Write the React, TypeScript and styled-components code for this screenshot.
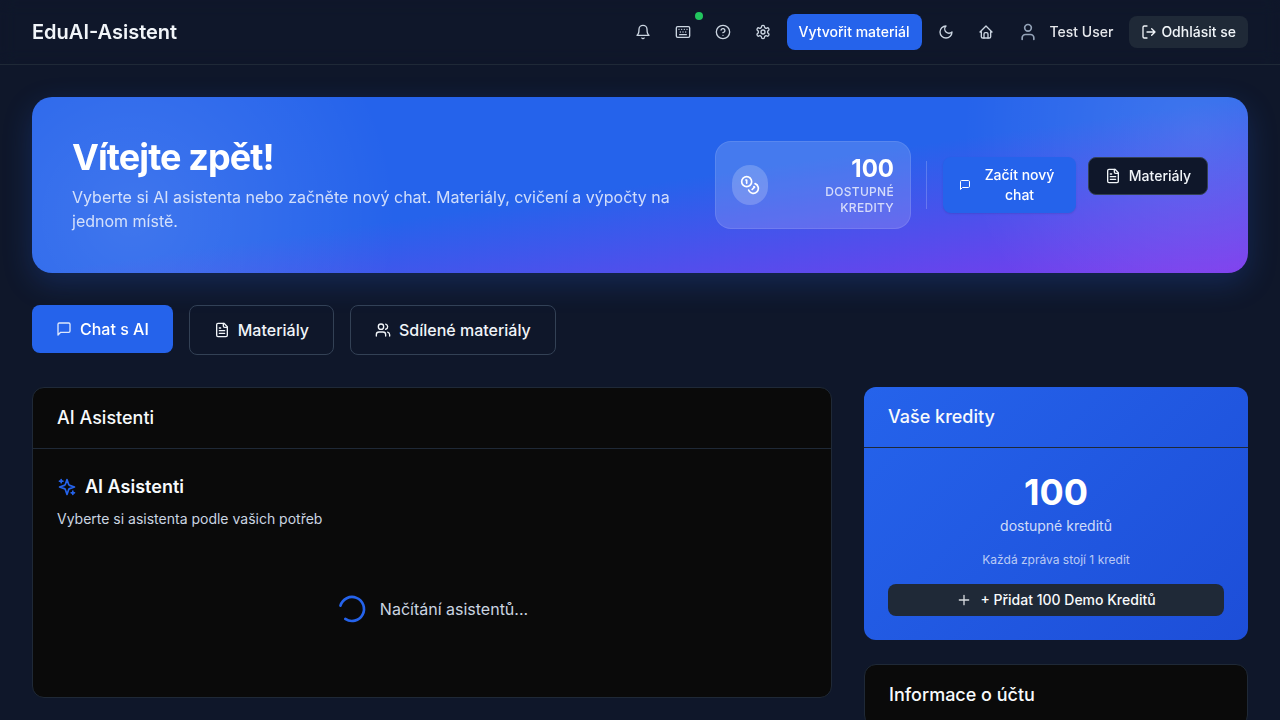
import React from 'react';
import styled, { createGlobalStyle, css } from 'styled-components';

const GlobalStyle = createGlobalStyle`
  *, *::before, *::after { box-sizing: border-box; }
  html { background: #0f172a; }
  body {
    margin: 0;
    height: 100vh;
    overflow: hidden;
    background: #0f172a;
    color: #f8fafc;
    font-family: Inter, "Liberation Sans", sans-serif;
    font-size: 16px;
    line-height: 24px;
  }
  h1, h2, h3, p { margin: 0; }
  button { font: inherit; border: 0; margin: 0; cursor: pointer; }
`;

const Svg = styled.svg<{ $size: number }>`
  width: ${p => p.$size}px;
  height: ${p => p.$size}px;
  flex: none;
  fill: none;
  stroke: currentColor;
  stroke-width: 2;
  stroke-linecap: round;
  stroke-linejoin: round;
`;

type IconProps = { size?: number; children?: React.ReactNode; className?: string };

const Icon = ({ size = 16, children, className }: IconProps) => (
  <Svg $size={size} viewBox="0 0 24 24" className={className} aria-hidden="true">
    {children}
  </Svg>
);

const BellIcon = () => (
  <Icon>
    <path d="M6 8a6 6 0 0 1 12 0c0 7 3 9 3 9H3s3-2 3-9" />
    <path d="M10.3 21a1.94 1.94 0 0 0 3.4 0" />
  </Icon>
);
const KeyboardIcon = () => (
  <Icon>
    <path d="M10 8h.01M12 12h.01M14 8h.01M16 12h.01M18 8h.01M6 8h.01M7 16h10M8 12h.01" />
    <rect width="20" height="16" x="2" y="4" rx="2" />
  </Icon>
);
const HelpIcon = () => (
  <Icon>
    <circle cx="12" cy="12" r="10" />
    <path d="M9.09 9a3 3 0 0 1 5.83 1c0 2-3 3-3 3M12 17h.01" />
  </Icon>
);
const SettingsIcon = () => (
  <Icon>
    <path d="M12.22 2h-.44a2 2 0 0 0-2 2v.18a2 2 0 0 1-1 1.73l-.43.25a2 2 0 0 1-2 0l-.15-.08a2 2 0 0 0-2.73.73l-.22.38a2 2 0 0 0 .73 2.73l.15.1a2 2 0 0 1 1 1.72v.51a2 2 0 0 1-1 1.74l-.15.09a2 2 0 0 0-.73 2.73l.22.38a2 2 0 0 0 2.73.73l.15-.08a2 2 0 0 1 2 0l.43.25a2 2 0 0 1 1 1.73V20a2 2 0 0 0 2 2h.44a2 2 0 0 0 2-2v-.18a2 2 0 0 1 1-1.73l.43-.25a2 2 0 0 1 2 0l.15.08a2 2 0 0 0 2.73-.73l.22-.39a2 2 0 0 0-.73-2.73l-.15-.08a2 2 0 0 1-1-1.74v-.5a2 2 0 0 1 1-1.74l.15-.09a2 2 0 0 0 .73-2.73l-.22-.38a2 2 0 0 0-2.73-.73l-.15.08a2 2 0 0 1-2 0l-.43-.25a2 2 0 0 1-1-1.73V4a2 2 0 0 0-2-2z" />
    <circle cx="12" cy="12" r="3" />
  </Icon>
);
const MoonIcon = () => (
  <Icon>
    <path d="M12 3a6 6 0 0 0 9 9 9 9 0 1 1-9-9Z" />
  </Icon>
);
const HomeIcon = () => (
  <Icon>
    <path d="M5 12H3l9-9 9 9h-2" />
    <path d="M5 12v7a2 2 0 0 0 2 2h10a2 2 0 0 0 2-2v-7" />
    <path d="M9 21v-6a2 2 0 0 1 2-2h2a2 2 0 0 1 2 2v6" />
  </Icon>
);
const UserIcon = () => (
  <Icon size={20}>
    <path d="M19 21v-2a4 4 0 0 0-4-4H9a4 4 0 0 0-4 4v2" />
    <circle cx="12" cy="7" r="4" />
  </Icon>
);
const LogOutIcon = () => (
  <Icon>
    <path d="M9 21H5a2 2 0 0 1-2-2V5a2 2 0 0 1 2-2h4M16 17l5-5-5-5M21 12H9" />
  </Icon>
);
const CoinsIcon = () => (
  <Icon size={20}>
    <circle cx="8" cy="8" r="6" />
    <path d="M18.09 10.37A6 6 0 1 1 10.34 18M7 6h1v4M16.71 13.88l.7.71-2.82 2.82" />
  </Icon>
);
const MessageIcon = ({ size }: { size?: number }) => (
  <Icon size={size}>
    <path d="M21 15a2 2 0 0 1-2 2H7l-4 4V5a2 2 0 0 1 2-2h14a2 2 0 0 1 2 2z" />
  </Icon>
);
const FileTextIcon = () => (
  <Icon>
    <path d="M15 2H6a2 2 0 0 0-2 2v16a2 2 0 0 0 2 2h12a2 2 0 0 0 2-2V7Z" />
    <path d="M14 2v4a2 2 0 0 0 2 2h4M10 9H8M16 13H8M16 17H8" />
  </Icon>
);
const UsersIcon = () => (
  <Icon>
    <path d="M16 21v-2a4 4 0 0 0-4-4H6a4 4 0 0 0-4 4v2" />
    <circle cx="9" cy="7" r="4" />
    <path d="M22 21v-2a4 4 0 0 0-3-3.87M16 3.13a4 4 0 0 1 0 7.75" />
  </Icon>
);
const SparklesIcon = () => (
  <Icon size={20}>
    <path d="m12 3-1.912 5.813a2 2 0 0 1-1.275 1.275L3 12l5.813 1.912a2 2 0 0 1 1.275 1.275L12 21l1.912-5.813a2 2 0 0 1 1.275-1.275L21 12l-5.813-1.912a2 2 0 0 1-1.275-1.275L12 3Z" />
    <path d="M5 3v4M19 17v4M3 5h4M17 19h4" />
  </Icon>
);
const PlusIcon = () => (
  <Icon>
    <path d="M5 12h14M12 5v14" />
  </Icon>
);

const Header = styled.header`
  display: flex;
  align-items: center;
  justify-content: space-between;
  height: 65px;
  padding: 0 32px;
  border-bottom: 1px solid #1f2937;
  backdrop-filter: blur(8px);
`;
const Brand = styled.div`
  font-size: 20px;
  font-weight: 600;
  line-height: 28px;
  color: #f1f5f9;
`;
const Nav = styled.nav`
  display: flex;
  align-items: center;
  gap: 8px;
`;
const IconButton = styled.button`
  position: relative;
  display: flex;
  align-items: center;
  justify-content: center;
  width: 32px;
  height: 32px;
  padding: 0;
  background: none;
  color: #cbd5e1;
`;
const StatusDot = styled.span`
  position: absolute;
  top: -4px;
  right: -4px;
  width: 8px;
  height: 8px;
  border-radius: 50%;
  background: #22c55e;
`;
const CreateButton = styled.button`
  height: 36px;
  width: 135px;
  padding: 0;
  border-radius: 8px;
  background: #2563eb;
  color: #fff;
  font-size: 14px;
  font-weight: 500;
  white-space: nowrap;
`;
const UserBox = styled.div`
  display: flex;
  align-items: center;
  gap: 12px;
  margin: 0 8px;
  font-size: 14px;
  font-weight: 500;
  color: #e5e7eb;
  svg { color: #94a3b8; }
`;
const LogoutButton = styled.button`
  display: flex;
  align-items: center;
  gap: 4px;
  height: 32px;
  padding: 0 12px;
  border-radius: 8px;
  background: #1f2937;
  color: #f1f5f9;
  font-size: 14px;
  font-weight: 500;
`;

const Main = styled.main`
  display: flex;
  flex-direction: column;
  gap: 32px;
  padding: 32px;
`;
const Hero = styled.section`
  display: flex;
  align-items: center;
  height: 176px;
  padding: 40px;
  border-radius: 20px;
  background:
    radial-gradient(circle at 100px 120px, rgba(255, 255, 255, 0.12), transparent 265px),
    radial-gradient(circle at 1165px 35px, rgba(255, 255, 255, 0.12), transparent 235px),
    linear-gradient(to bottom right, #2563eb 0%, #2563eb 50%, #7c3aed 100%);
  box-shadow: 0 10px 30px rgba(37, 99, 235, 0.23);
  will-change: transform;
`;
const HeroText = styled.div`
  flex: 1;
`;
const HeroTitle = styled.h1`
  margin-bottom: 8px;
  font-size: 36px;
  font-weight: 700;
  line-height: 40px;
  letter-spacing: -0.9px;
  color: #fff;
`;
const HeroLead = styled.p`
  max-width: 610px;
  color: rgba(255, 255, 255, 0.78);
`;
const CreditBadge = styled.div`
  display: flex;
  align-items: center;
  justify-content: space-between;
  width: 196px;
  height: 88px;
  padding: 0 16px;
  border: 1px solid rgba(255, 255, 255, 0.1);
  border-radius: 16px;
  background: rgba(255, 255, 255, 0.15);
`;
const CoinDisc = styled.div`
  display: flex;
  align-items: center;
  justify-content: center;
  width: 36px;
  height: 40px;
  border-radius: 18px;
  background: rgba(255, 255, 255, 0.2);
  color: #fff;
`;
const CreditText = styled.div`
  width: 80px;
  padding-top: 2px;
  text-align: right;
`;
const CreditNumber = styled.div`
  font-size: 24px;
  font-weight: 700;
  line-height: 24px;
  margin-bottom: 3px;
  color: #fff;
`;
const CreditLabel = styled.div`
  font-size: 12px;
  font-weight: 500;
  line-height: 16px;
  letter-spacing: 0.3px;
  color: rgba(255, 255, 255, 0.75);
`;
const Divider = styled.div`
  width: 1px;
  height: 48px;
  margin: 0 16px 0 15px;
  background: rgba(255, 255, 255, 0.2);
`;
const HeroActions = styled.div`
  display: flex;
  align-items: flex-start;
  gap: 12px;
`;
const HeroButton = styled.button<{ $outline?: boolean }>`
  display: flex;
  align-items: center;
  justify-content: center;
  border-radius: 8px;
  font-size: 14px;
  font-weight: 500;
  line-height: 20px;
  color: #fff;
  ${p => p.$outline ? css`
    gap: 8px;
    width: 120px;
    height: 38px;
    padding: 0;
    border: 1px solid #334155;
    background: #0f172a;
    color: #f1f5f9;
  ` : css`
    gap: 12px;
    width: 133px;
    height: 56px;
    padding: 0 20px 0 16px;
    background: #2563eb;
    box-shadow: 0 1px 2px rgba(0, 0, 0, 0.1);
  `}
`;

const Tabs = styled.div`
  display: flex;
  align-items: flex-start;
  gap: 16px;
`;
const Tab = styled.button<{ $active?: boolean }>`
  display: flex;
  align-items: center;
  gap: 8px;
  padding: 12px 24px;
  border-radius: 8px;
  font-weight: 500;
  line-height: 24px;
  ${p => p.$active ? css`
    background: #2563eb;
    color: #fff;
    will-change: transform;
    svg { opacity: 0.85; }
  ` : css`
    border: 1px solid #334155;
    background: #0f172a;
    color: #f1f5f9;
  `}
`;

const Columns = styled.div`
  display: grid;
  grid-template-columns: 800px 384px;
  gap: 32px;
  align-items: start;
`;
const Side = styled.div`
  display: flex;
  flex-direction: column;
  gap: 24px;
`;
const Card = styled.section`
  border: 1px solid #1f2937;
  border-radius: 12px;
  background: #0a0a0a;
`;
const CardHeader = styled.h2`
  padding: 16px 24px;
  border-bottom: 1px solid #1f2937;
  font-size: 18px;
  font-weight: 500;
  line-height: 28px;
  color: #f8fafc;
`;
const AssistantsBody = styled.div`
  height: 248px;
  padding: 24px;
`;
const SectionTitle = styled.h3`
  display: flex;
  align-items: center;
  gap: 8px;
  margin-bottom: 8px;
  font-size: 18px;
  font-weight: 600;
  line-height: 28px;
  svg { color: #2563eb; }
`;
const Muted = styled.p`
  font-size: 14px;
  line-height: 20px;
  color: #cbd5e1;
`;
const Loading = styled.div`
  display: flex;
  align-items: center;
  justify-content: center;
  gap: 12px;
  margin-top: 64px;
  color: #cbd5e1;
  svg { color: #2563eb; transform: rotate(196deg); }
`;
const CreditCard = styled.section`
  height: 253px;
  border-radius: 12px;
  background: linear-gradient(135deg, #2563eb, #1d4ed8);
`;
const CreditBody = styled.div`
  display: flex;
  flex-direction: column;
  align-items: center;
  padding: 24px;
`;
const BigNumber = styled.div`
  margin-bottom: 4px;
  font-size: 36px;
  font-weight: 700;
  line-height: 40px;
  color: #fff;
`;
const CreditUnit = styled.div`
  font-size: 14px;
  line-height: 20px;
  color: rgba(255, 255, 255, 0.8);
`;
const CreditNote = styled.div`
  margin: 16px 0;
  font-size: 12px;
  line-height: 16px;
  color: rgba(255, 255, 255, 0.7);
`;
const AddButton = styled.button`
  display: flex;
  align-items: center;
  justify-content: center;
  gap: 8px;
  width: 100%;
  height: 32px;
  border-radius: 8px;
  background: #1f2937;
  color: #f8fafc;
  font-size: 14px;
  font-weight: 500;
  svg { opacity: 0.85; }
`;

export default function App() {
  return (
    <>
      <GlobalStyle />
      <Header>
        <Brand>EduAI-Asistent</Brand>
        <Nav>
          <IconButton aria-label="Oznámení"><BellIcon /></IconButton>
          <IconButton aria-label="Klávesové zkratky"><KeyboardIcon /><StatusDot /></IconButton>
          <IconButton aria-label="Nápověda"><HelpIcon /></IconButton>
          <IconButton aria-label="Nastavení"><SettingsIcon /></IconButton>
          <CreateButton>Vytvořit materiál</CreateButton>
          <IconButton aria-label="Tmavý režim"><MoonIcon /></IconButton>
          <IconButton aria-label="Domů"><HomeIcon /></IconButton>
          <UserBox><UserIcon />Test User</UserBox>
          <LogoutButton><LogOutIcon />Odhlásit se</LogoutButton>
        </Nav>
      </Header>
      <Main>
        <Hero>
          <HeroText>
            <HeroTitle>Vítejte zpět!</HeroTitle>
            <HeroLead>Vyberte si AI asistenta nebo začněte nový chat. Materiály, cvičení a výpočty na jednom místě.</HeroLead>
          </HeroText>
          <CreditBadge>
            <CoinDisc><CoinsIcon /></CoinDisc>
            <CreditText>
              <CreditNumber>100</CreditNumber>
              <CreditLabel>DOSTUPNÉ KREDITY</CreditLabel>
            </CreditText>
          </CreditBadge>
          <Divider />
          <HeroActions>
            <HeroButton><MessageIcon size={12} />Začít nový chat</HeroButton>
            <HeroButton $outline><FileTextIcon />Materiály</HeroButton>
          </HeroActions>
        </Hero>
        <Tabs>
          <Tab $active><MessageIcon />Chat s AI</Tab>
          <Tab><FileTextIcon />Materiály</Tab>
          <Tab><UsersIcon />Sdílené materiály</Tab>
        </Tabs>
        <Columns>
          <Card>
            <CardHeader>AI Asistenti</CardHeader>
            <AssistantsBody>
              <SectionTitle><SparklesIcon />AI Asistenti</SectionTitle>
              <Muted>Vyberte si asistenta podle vašich potřeb</Muted>
              <Loading>
                <Icon size={32}><path d="M21 12a9 9 0 1 1-6.219-8.56" /></Icon>
                Načítání asistentů...
              </Loading>
            </AssistantsBody>
          </Card>
          <Side>
            <CreditCard>
              <CardHeader>Vaše kredity</CardHeader>
              <CreditBody>
                <BigNumber>100</BigNumber>
                <CreditUnit>dostupné kreditů</CreditUnit>
                <CreditNote>Každá zpráva stojí 1 kredit</CreditNote>
                <AddButton><PlusIcon />+ Přidat 100 Demo Kreditů</AddButton>
              </CreditBody>
            </CreditCard>
            <Card>
              <CardHeader>Informace o účtu</CardHeader>
            </Card>
          </Side>
        </Columns>
      </Main>
    </>
  );
}
